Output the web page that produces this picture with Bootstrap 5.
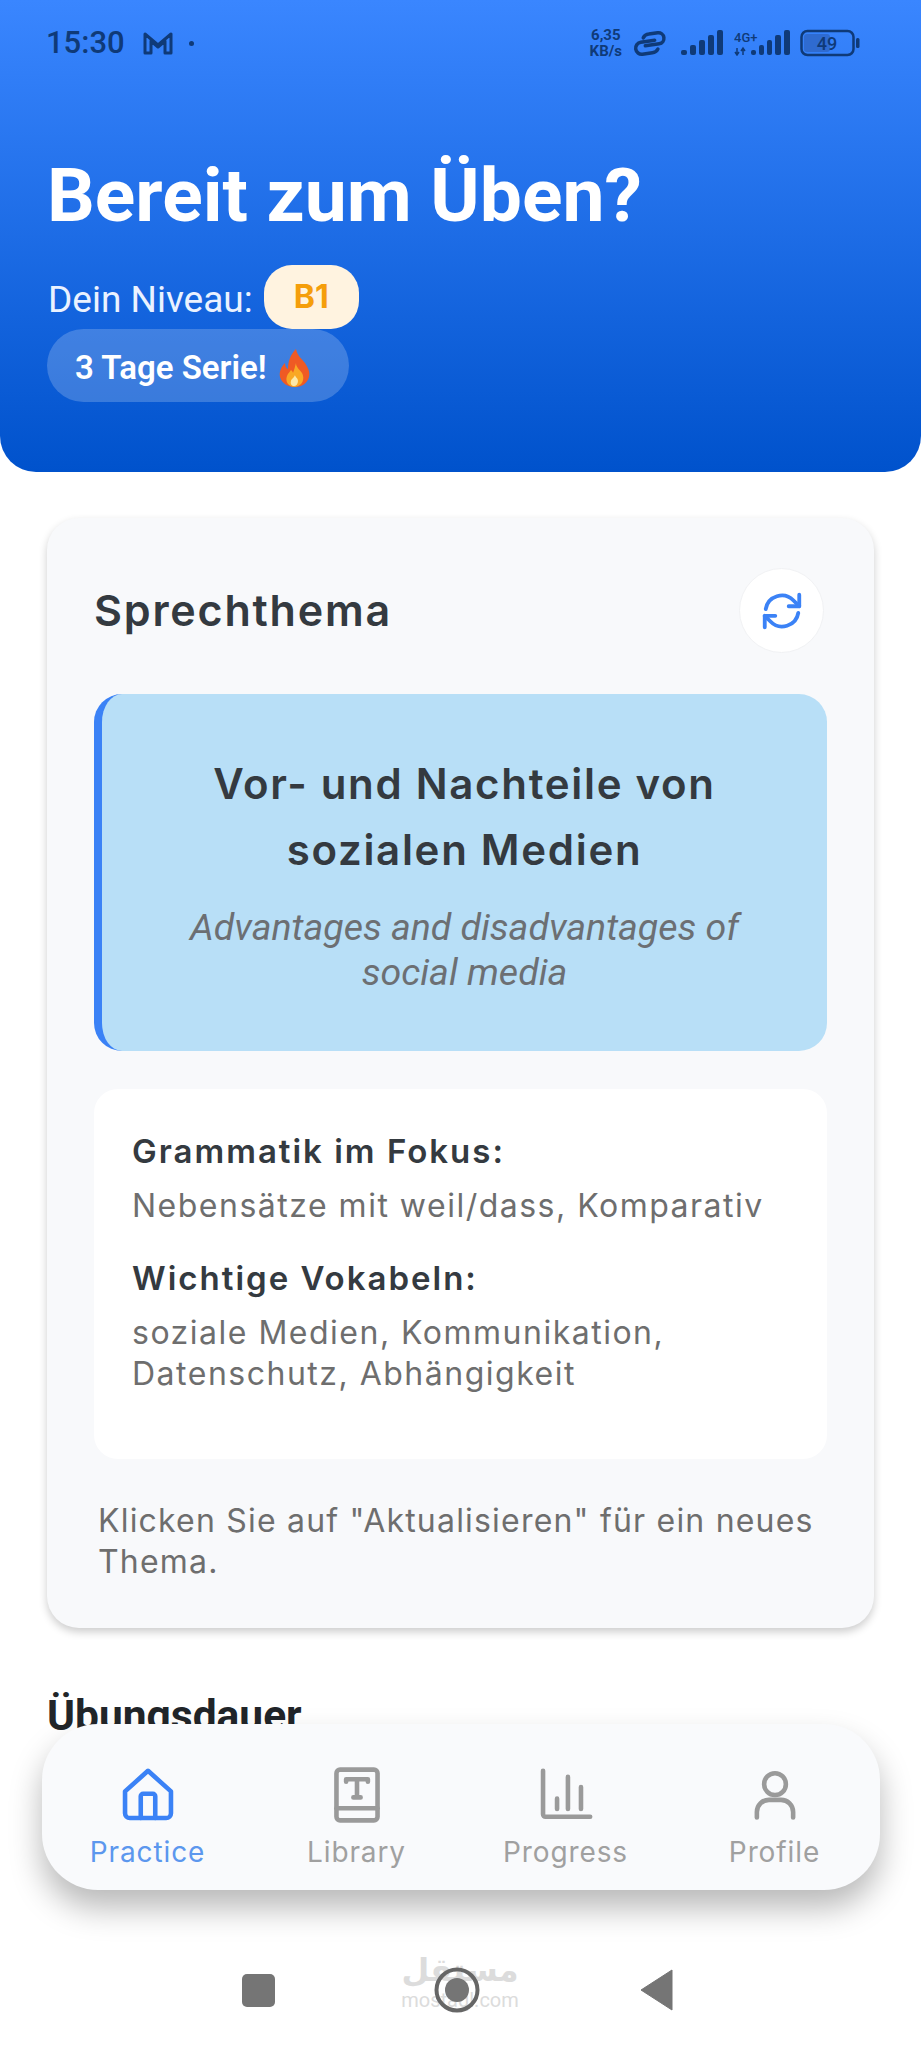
<!DOCTYPE html>
<html lang="de">
<head>
  <meta charset="UTF-8" />
  <meta name="viewport" content="width=device-width, initial-scale=1.0"/>
  <title>Sprechthema</title>
  <link href="https://cdn.jsdelivr.net/npm/bootstrap@5.3.2/dist/css/bootstrap.min.css" rel="stylesheet" />
  <style>
    body {
      margin: 0;
      background-color: #ffffff;
      font-family: "Inter", "Noto Sans", sans-serif;
      color: #343a40;
    }

    .app-screen {
      position: relative;
      width: 921px;
      height: 2048px;
      overflow: hidden;
    }

    /* HEADER */
    .hero {
      height: 472px;
      background: linear-gradient(180deg, #3a86ff 0%, #0052cc 100%);
      border-bottom-left-radius: 36px;
      border-bottom-right-radius: 36px;
      padding: 0 48px;
      font-family: "Roboto", sans-serif;
      color: #ffffff;
    }

    .status-row {
      height: 86px;
      margin-left: -2px;
      margin-right: 13px;
      color: #0f3a78;
    }

    .status-time { font-size: 31px; font-weight: 500; margin-right: 18px; }
    .status-speed { font-size: 15px; font-weight: 700; line-height: 16px; text-align: center; margin-right: 9px; }
    .status-dot { width: 5px; height: 5px; border-radius: 50%; background-color: #0f3a78; margin-left: 16px; }
    .status-net { margin-left: 12px; }
    .status-lte { width: 58px; height: 26px; margin-left: 11px; }

    .hero-title {
      font-size: 75px;
      font-weight: 700;
      line-height: 86px;
      margin: 66px 0 0 -1px;
    }

    .level-row { height: 64px; margin-top: 27px; font-size: 37px; line-height: 64px; color: #eaf2ff; }
    .level-label { padding-top: 6px; }

    .level-pill {
      width: 95px;
      height: 64px;
      margin-left: 11px;
      border-radius: 28px;
      background-color: #fff3e0;
      color: #f59e0b;
      font-family: "Inter", sans-serif;
      font-size: 32px;
      font-weight: 700;
    }

    .streak-pill {
      width: 302px;
      height: 73px;
      margin-left: -1px;
      padding: 4px 0 0 28px;
      border-radius: 37px;
      background-color: rgba(255, 255, 255, 0.2);
      font-size: 33px;
      font-weight: 600;
      gap: 12px;
    }

    /* TOPIC CARD */
    .topic-card {
      margin: 46px 47px 0 47px;
      height: 1110px;
      padding: 50px 47px 0;
      background-color: #f8f9fb;
      border: 0;
      border-radius: 32px;
      box-shadow: 0 4px 8px rgba(0, 0, 0, 0.2);
    }

    .topic-head { height: 85px; margin-right: 3px; }
    .topic-head h2 { font-size: 43px; font-weight: 600; letter-spacing: 1.8px; margin: 0; color: #343a40; }

    .refresh-btn {
      width: 85px;
      height: 85px;
      padding: 0;
      border-radius: 50%;
      background-color: #ffffff;
      border: 1px solid #f1f2f4;
    }

    .topic-box {
      height: 357px;
      margin-top: 41px;
      padding: 0 70px;
      background-color: #b8dff7;
      border-left: 8px solid #3b82f6;
      border-radius: 28px;
      text-align: center;
    }

    .topic-box h3 { font-size: 42px; font-weight: 600; letter-spacing: 1.7px; line-height: 66px; margin: 0 0 22px; color: #343a40; }
    .topic-box p { font-family: "Roboto", sans-serif; font-style: italic; font-size: 37.500px; line-height: 45px; margin: 0; color: #6c6f73; }

    .detail-box {
      height: 370px;
      margin-top: 38px;
      padding: 40px 38px 0;
      background-color: #ffffff;
      border-radius: 24px;
    }

    .detail-box h4 { font-size: 33px; font-weight: 600; letter-spacing: 2px; line-height: 44px; margin: 0 0 12px; color: #343a40; }
    .detail-box p { font-size: 32px; letter-spacing: 1.5px; line-height: 41px; margin: 0 0 30px; color: #6e6e6e; }

    .topic-note { font-size: 32px; letter-spacing: 1.2px; line-height: 41px; margin: 41px 0 0 4px; color: #6e6e6e; }

    .duration-title {
      font-family: "Roboto", sans-serif;
      font-size: 42.500px;
      font-weight: 700;
      line-height: 46px;
      margin: 65px 0 0 47px;
      color: #212529;
    }

    /* FLOATING TAB BAR */
    .tab-bar {
      position: absolute;
      left: 42px;
      top: 1724px;
      width: 838px;
      height: 166px;
      padding: 42px 0 0 0;
      background-color: #f9fafc;
      border-radius: 56px;
      box-shadow: 0 18px 32px rgba(0, 0, 0, 0.28);
    }

    .tab-item {
      width: 209px;
      color: #a0a0a0;
      font-size: 28px;
      letter-spacing: 0.9px;
      line-height: 36px;
      gap: 10px;
    }

    .tab-item.is-active { color: #5c97ee; }
    .tab-item svg { width: 60px; height: 58px; fill: none; stroke: #9a9a9a; stroke-width: 1.9; stroke-linecap: round; stroke-linejoin: round; }
    .tab-item.is-active svg { stroke: #3b82f6; }

    /* ANDROID NAV */
    .sys-nav {
      position: absolute;
      left: 0;
      right: 0;
      top: 1960px;
      height: 60px;
      gap: 157px;
      padding-right: 6px;
    }

    .sys-square { width: 33px; height: 33px; border-radius: 5px; background-color: #757575; }
    .watermark {
      position: absolute;
      left: 360px;
      top: 1950px;
      width: 200px;
      text-align: center;
      color: #dcdcdc;
      line-height: 1;
    }
    .watermark-ar { font-family: "DejaVu Sans", sans-serif; font-weight: 700; font-size: 32px; display: block; line-height: 40px; }
    .watermark-en { font-family: "Roboto", sans-serif; font-size: 20px; display: block; margin-top: 0; }
  </style>
</head>
<body>
  <div class="app-screen">

    <header class="hero">
      <div class="status-row d-flex align-items-center justify-content-between">
        <div class="d-flex align-items-center">
          <span class="status-time">15:30</span>
          <svg width="30" height="24" viewBox="0 0 30 24" fill="none" stroke="#0f3a78" stroke-width="3" stroke-linejoin="round"><path d="M2 22V3L15 14 28 3V22H22V10L15 16 8 10V22Z"/></svg>
          <span class="status-dot"></span>
        </div>
        <div class="d-flex align-items-center">
          <div class="status-speed">6,35<br>KB/s</div>
          <svg width="38" height="28" viewBox="0 0 38 28" fill="none" stroke="#0f3a78" stroke-width="3.500" stroke-linecap="round"><g transform="rotate(-8 19 14)"><path d="M14 16h14a5.500 5.500 0 0 0 0-11h-9a7 7 0 0 0-6 3"/><path d="M24 12H10a6 6 0 0 0 0 12h10a7 7 0 0 0 6-3"/></g></svg>
          <svg class="status-net" width="42" height="26" viewBox="0 0 42 26" fill="#0f3a78"><rect x="0" y="20" width="6" height="5" rx="2"/><rect x="9" y="15" width="6" height="10" rx="2"/><rect x="18" y="10" width="6" height="15" rx="2"/><rect x="27" y="5" width="6" height="20" rx="2"/><rect x="36" y="0" width="6" height="25" rx="2"/></svg>
          <div class="status-lte">
            <svg width="58" height="26" viewBox="0 0 58 26" fill="#0f3a78">
              <text x="0" y="12" font-family="Roboto" font-size="13" font-weight="500">4G+</text>
              <path d="M3 18v7M1 22l2 3 2-3M9 25v-7M7 21l2-3 2 3" stroke="#0f3a78" stroke-width="1.500" fill="none"/>
              <rect x="17" y="20" width="5" height="5" rx="2"/><rect x="25" y="15" width="5" height="10" rx="2"/><rect x="33" y="10" width="5" height="15" rx="2"/><rect x="41" y="5" width="6" height="20" rx="2"/><rect x="50" y="0" width="6" height="25" rx="2"/>
            </svg>
          </div>
          <svg class="ms-2" width="60" height="28" viewBox="0 0 60 28">
            <rect x="4" y="5" width="26" height="18" rx="3" fill="#2f6bd0"/>
            <rect x="1.500" y="2" width="52" height="24" rx="6" fill="none" stroke="#0f3a78" stroke-width="2.500"/>
            <rect x="56" y="9" width="3.500" height="10" rx="1.500" fill="#0f3a78"/>
            <text x="27" y="21" text-anchor="middle" font-family="Roboto" font-size="18" font-weight="500" fill="#0f3a78">49</text>
          </svg>
        </div>
      </div>

      <h1 class="hero-title">Bereit zum Üben?</h1>

      <div class="level-row d-flex align-items-center">
        <span class="level-label">Dein Niveau:</span>
        <span class="level-pill d-flex align-items-center justify-content-center">B1</span>
      </div>
      <div class="streak-pill d-flex align-items-center">
        <span>3 Tage Serie!</span>
        <svg width="32" height="38" viewBox="0 0 32 38">
          <path d="M17 0c1 6 5 9 9 14 4 6 5 10 4 14-2 7-8 10-14 10S3 35 1 28c-1-5 1-10 5-14 0 3 1 5 3 6 0-7 2-14 8-20Z" fill="#ef5a24"/>
          <path d="M17 14c0 4 3 6 6 10 3 5 1 13-7 14-7 0-10-6-8-11 1-3 3-4 4-6 1 1 2 2 2 3 1-3 2-6 3-10Z" fill="#f9a825"/>
          <path d="M16 26c0 2 3 3 3 6 0 3-2 5-4 5s-4-2-3-5c0-2 3-3 4-6Z" fill="#fde9a8"/>
        </svg>
      </div>
    </header>

    <section class="card topic-card">
      <div class="topic-head d-flex align-items-center justify-content-between">
        <h2>Sprechthema</h2>
        <button type="button" class="btn refresh-btn d-flex align-items-center justify-content-center" aria-label="Aktualisieren">
          <svg width="46" height="46" viewBox="0 0 24 24" fill="none" stroke="#3b82f6" stroke-width="2" stroke-linecap="round" stroke-linejoin="round">
            <path d="M3.500 11A8.500 8.500 0 0 1 18 6.500L21 9.500"/>
            <path d="M21 3.500V9.500H15.500"/>
            <path d="M20.500 13A8.500 8.500 0 0 1 6 17.500L3 14.500"/>
            <path d="M3 20.500V14.500H8.500"/>
          </svg>
        </button>
      </div>

      <div class="topic-box d-flex flex-column justify-content-center">
        <h3>Vor- und Nachteile von sozialen Medien</h3>
        <p>Advantages and disadvantages of social media</p>
      </div>

      <div class="detail-box">
        <h4>Grammatik im Fokus:</h4>
        <p>Nebensätze mit weil/dass, Komparativ</p>
        <h4>Wichtige Vokabeln:</h4>
        <p>soziale Medien, Kommunikation, Datenschutz, Abhängigkeit</p>
      </div>

      <p class="topic-note">Klicken Sie auf "Aktualisieren" für ein neues Thema.</p>
    </section>

    <h2 class="duration-title">Übungsdauer</h2>

    <nav class="tab-bar d-flex justify-content-center">
      <div class="tab-item is-active d-flex flex-column align-items-center">
        <svg viewBox="0 0 24 24"><path d="M2.500 10.500 12 2l9.500 8.500v9a2 2 0 0 1-2 2h-15a2 2 0 0 1-2-2Z"/><path d="M9 21.500V12.500a1 1 0 0 1 1-1h4a1 1 0 0 1 1 1v9"/></svg>
        <span>Practice</span>
      </div>
      <div class="tab-item d-flex flex-column align-items-center">
        <svg viewBox="0 0 24 24"><rect x="3.500" y="1.500" width="17" height="21" rx="1.500"/><path d="M3.500 17.500h17"/><path d="M7.500 6.500V5.500h9v1M12 5.500v7.500M10.500 13h3"/></svg>
        <span>Library</span>
      </div>
      <div class="tab-item d-flex flex-column align-items-center">
        <svg viewBox="0 0 24 24"><path d="M2.500 2v18a1 1 0 0 0 1 1H22"/><path d="M8.300 13.500v4.300M12.800 4.500v13.300M18.200 8.700v9.100"/></svg>
        <span>Progress</span>
      </div>
      <div class="tab-item d-flex flex-column align-items-center">
        <svg viewBox="0 0 24 24"><circle cx="12" cy="7.500" r="4.500"/><path d="M4.500 21.300V19a5 5 0 0 1 5-5h5a5 5 0 0 1 5 5v2.300"/></svg>
        <span>Profile</span>
      </div>
    </nav>

    <div class="watermark">
      <span class="watermark-ar">مستقل</span>
      <span class="watermark-en">mostaql.com</span>
    </div>

    <div class="sys-nav d-flex align-items-center justify-content-center">
      <span class="sys-square"></span>
      <svg width="50" height="50" viewBox="0 0 50 50" fill="none"><circle cx="25" cy="25" r="20.500" stroke="#666666" stroke-width="4"/><circle cx="25" cy="25" r="12" fill="#757575"/></svg>
      <svg width="34" height="42" viewBox="0 0 34 42"><path d="M33 1v40L2 21Z" fill="#757575" stroke="#757575" stroke-linejoin="round"/></svg>
    </div>
  </div>

  <script src="https://cdn.jsdelivr.net/npm/bootstrap@5.3.2/dist/js/bootstrap.bundle.min.js"></script>
</body>
</html>
